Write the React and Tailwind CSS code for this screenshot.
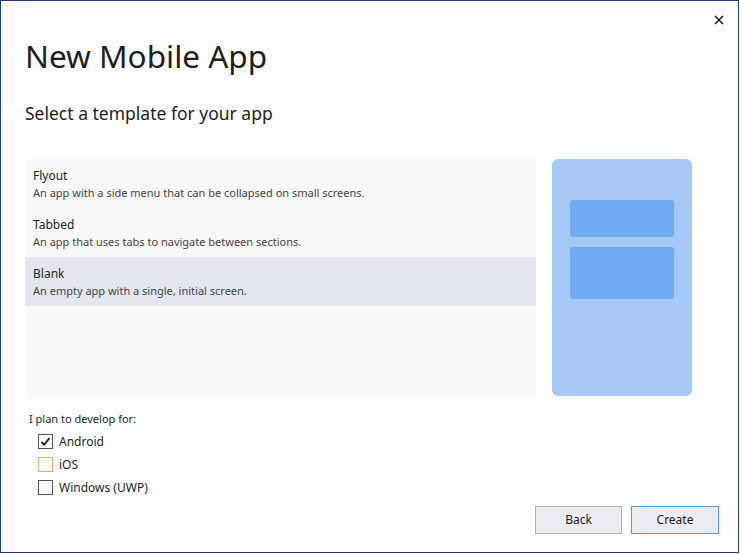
import React, { useState } from "react";

const templates = [
  { name: "Flyout", desc: "An app with a side menu that can be collapsed on small screens." },
  { name: "Tabbed", desc: "An app that uses tabs to navigate between sections." },
  { name: "Blank", desc: "An empty app with a single, initial screen." },
];

function Check({ checked, focus, label }) {
  return (
    <div className="flex items-center h-[23px] pl-[13px]">
      <span
        className={
          "w-[15px] h-[15px] border flex items-center justify-center bg-white " +
          (focus ? "border-[#e5b564]" : "border-[#555]")
        }
      >
        {checked && (
          <svg width="11" height="11" viewBox="0 0 11 11">
            <path d="M1.5 6 L4.2 8.7 L9.5 2" fill="none" stroke="#1a1a1a" strokeWidth="1.8" />
          </svg>
        )}
      </span>
      <span className="ml-[6px] text-[12px] text-[#1e1e1e]">{label}</span>
    </div>
  );
}

export default function App() {
  const [selected, setSelected] = useState(2);

  return (
    <div
      className="w-[739px] h-[553px] border border-[#1f3e7a] bg-white flex flex-col relative"
      style={{ fontFamily: '"Noto Sans", "Open Sans", sans-serif' }}
    >
      <button className="absolute right-[11px] top-[11px] w-[16px] h-[16px] flex items-center justify-center">
        <svg width="10" height="10" viewBox="0 0 10 10">
          <path d="M1 1 L9 9 M9 1 L1 9" stroke="#1a1a1a" strokeWidth="1.5" />
        </svg>
      </button>

      <h1 className="mt-[35px] ml-[24px] text-[31.5px] leading-[40px] text-[#1e1e1e] font-normal">New Mobile App</h1>
      <h2 className="mt-[25px] ml-[24px] text-[17.5px] leading-[24px] text-[#1e1e1e]">Select a template for your app</h2>

      <div className="flex mt-[34px] ml-[24px]">
        <div className="w-[511px] h-[240px] bg-[#f9f9f9]">
          {templates.map((t, i) => (
            <div
              key={t.name}
              onClick={() => setSelected(i)}
              className={"h-[49px] px-[8px] pt-[8px] " + (selected === i ? "bg-[#e3e6ef]" : "")}
            >
              <div className="text-[12px] leading-[17px] text-[#1e1e1e]">{t.name}</div>
              <div className="text-[11px] leading-[17px] text-[#444]">{t.desc}</div>
            </div>
          ))}
        </div>

        <div className="ml-[16px] w-[140px] h-[237px] bg-[#a7c9f5] rounded-[6px] px-[18px] pt-[41px] flex flex-col gap-[10px]">
          <div className="h-[37px] bg-[#70abf0] rounded-[3px]" />
          <div className="h-[52px] bg-[#70abf0] rounded-[3px]" />
        </div>
      </div>

      <div className="mt-[11px] ml-[28px] text-[11px] leading-[17px] text-[#1e1e1e]">I plan to develop for:</div>
      <div className="ml-[24px] mt-[3px] flex flex-col">
        <Check checked label="Android" />
        <Check focus label="iOS" />
        <Check label="Windows (UWP)" />
      </div>

      <div className="absolute right-[19px] bottom-[18px] flex gap-[9px]">
        <button className="w-[87px] h-[28px] border border-[#adadad] bg-[#ecebf0] text-[12px] text-[#1e1e1e]">Back</button>
        <button className="w-[88px] h-[28px] border border-[#4d9ff0] bg-[#ecebf0] text-[12px] text-[#1e1e1e]">Create</button>
      </div>
    </div>
  );
}
